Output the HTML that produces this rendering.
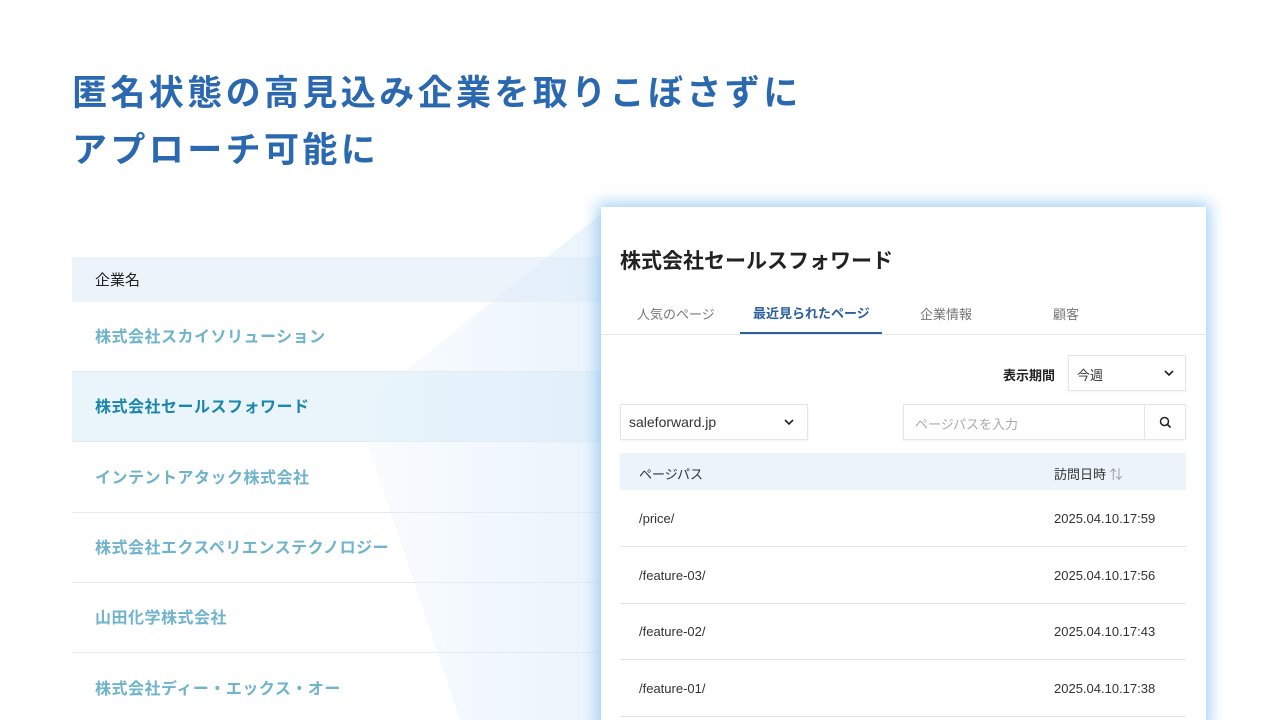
<!DOCTYPE html>
<html><head><meta charset="utf-8"><style>
*{margin:0;padding:0;box-sizing:border-box}
html,body{width:1280px;height:720px;overflow:hidden}
body{background:#fff;font-family:"Liberation Sans","Noto Sans CJK JP",sans-serif;position:relative}
.h{position:absolute;left:72px;color:#2a68b0;font-size:35px;font-weight:700;letter-spacing:3.4px;line-height:1}
.lt{position:absolute;left:72px;width:530px}
.row{position:absolute;left:0;width:530px;height:70px;border-bottom:1px solid #e6eaee;padding-left:23px;line-height:72px;font-size:16px;color:#6fb3cc;font-weight:600;letter-spacing:.5px}
.beam{position:absolute;left:360px;top:207px;width:250px;height:513px;background:linear-gradient(90deg,rgba(230,242,252,.2),rgba(220,236,250,.6));clip-path:polygon(0 39%,100% 0,100% 100%,40% 100%,0 42%)}
.panel{position:absolute;left:601px;top:207px;width:605px;height:520px;background:#fff;box-shadow:0 0 14px 4px rgba(110,180,240,.6)}
.p{position:absolute;font-size:13px;color:#333}
.box{position:absolute;border:1px solid #e3e6ea;background:#fff;box-shadow:0 1px 2px rgba(0,0,0,.05)}
.tr{position:absolute;left:19px;width:566px;height:57px;border-bottom:1px solid #e3e6ea;font-size:13px;color:#333}
.tr span{position:absolute;top:21px}
</style></head><body>
<div class="h" style="top:76px">匿名状態の高見込み企業を取りこぼさずに</div>
<div class="h" style="top:133px">アプローチ可能に</div>
<div class="lt" style="top:257px;height:463px">
 <div style="position:absolute;left:0;top:0;width:530px;height:45px;background:#edf3fb;padding-left:23px;line-height:47px;font-size:15px;color:#222">企業名</div>
 <div class="row" style="top:45px">株式会社スカイソリューション</div>
 <div class="row" style="top:115px;background:#eaf5fb;color:#1b86ad;font-weight:700">株式会社セールスフォワード</div>
 <div class="row" style="top:186px">インテントアタック株式会社</div>
 <div class="row" style="top:256px">株式会社エクスペリエンステクノロジー</div>
 <div class="row" style="top:326px">山田化学株式会社</div>
 <div class="row" style="top:397px">株式会社ディー・エックス・オー</div>
</div>
<div class="beam"></div>
<div class="panel">
 <div class="p" style="left:19px;top:38px;font-size:21px;font-weight:700;color:#222">株式会社セールスフォワード</div>
 <div class="p" style="left:36px;top:97px;color:#777">人気のページ</div>
 <div class="p" style="left:152px;top:96px;color:#2a5f9e;font-weight:600">最近見られたページ</div>
 <div class="p" style="left:319px;top:97px;color:#777">企業情報</div>
 <div class="p" style="left:452px;top:97px;color:#777">顧客</div>
 <div style="position:absolute;left:0;top:127px;width:605px;height:1px;background:#e6e8eb"></div>
 <div style="position:absolute;left:139px;top:125px;width:142px;height:2px;background:#2a5f9e"></div>
 <div class="p" style="left:402px;top:158px;font-weight:700;color:#222">表示期間</div>
 <div class="box" style="left:467px;top:148px;width:118px;height:36px"><span class="p" style="left:8px;top:9px">今週</span>
  <svg style="position:absolute;right:10px;top:12px" width="12" height="10" viewBox="0 0 12 10"><path d="M2 3l4 4 4-4" fill="none" stroke="#222" stroke-width="1.6"/></svg></div>
 <div class="box" style="left:19px;top:197px;width:188px;height:36px"><span class="p" style="left:8px;top:9px;font-size:14px">saleforward.jp</span>
  <svg style="position:absolute;right:12px;top:12px" width="12" height="10" viewBox="0 0 12 10"><path d="M2 3l4 4 4-4" fill="none" stroke="#222" stroke-width="1.6"/></svg></div>
 <div class="box" style="left:302px;top:197px;width:283px;height:36px"><span class="p" style="left:11px;top:9px;color:#aaa">ページパスを入力</span>
  <div style="position:absolute;left:240px;top:0;width:1px;height:34px;background:#e3e6ea"></div>
  <svg style="position:absolute;left:255px;top:11px" width="13" height="13" viewBox="0 0 13 13"><circle cx="5.5" cy="5.5" r="4" fill="none" stroke="#222" stroke-width="1.5"/><path d="M8.5 8.5l3 3" stroke="#222" stroke-width="1.6"/></svg></div>
 <div style="position:absolute;left:19px;top:246px;width:566px;height:37px;background:#edf3fb"><span class="p" style="left:19px;top:11px">ページパス</span><span class="p" style="left:434px;top:11px">訪問日時 <span style="color:#999">⇅</span></span></div>
 <div class="tr" style="top:283px"><span style="left:19px">/price/</span><span style="left:434px">2025.04.10.17:59</span></div>
 <div class="tr" style="top:340px"><span style="left:19px">/feature-03/</span><span style="left:434px">2025.04.10.17:56</span></div>
 <div class="tr" style="top:396px"><span style="left:19px">/feature-02/</span><span style="left:434px">2025.04.10.17:43</span></div>
 <div class="tr" style="top:453px"><span style="left:19px">/feature-01/</span><span style="left:434px">2025.04.10.17:38</span></div>
</div>
</body></html>
